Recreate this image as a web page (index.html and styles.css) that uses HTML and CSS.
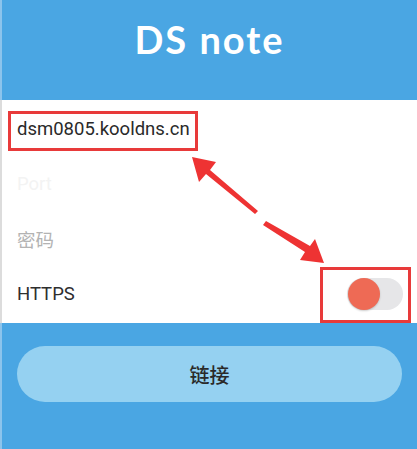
FILE: index.html
```html
<!DOCTYPE html>
<html lang="zh">
<head>
<meta charset="utf-8">
<title>DS note</title>
<link rel="stylesheet" href="styles.css">
</head>
<body>
<div class="app">
  <header class="top">
    <h1 class="title">DS note</h1>
  </header>
  <section class="form">
    <div class="row"><span class="value">dsm0805.kooldns.cn</span></div>
    <div class="row"><span class="ph-faint">Port</span></div>
    <div class="row"><span class="ph">密码</span></div>
    <div class="row row-toggle">
      <span class="label">HTTPS</span>
      <span class="switch"><span class="knob"></span></span>
    </div>
  </section>
  <div class="actions">
    <button class="connect">链接</button>
  </div>

  <div class="mark mark-host"></div>
  <div class="mark mark-switch"></div>
  <svg class="arrows" width="417" height="449" viewBox="0 0 417 449">
    <polygon fill="#ee3333" points="192,157 216,162 210,170 258,211 255,214 206,174 199,182"/>
    <polygon fill="#ee3333" points="324,263 300,260 305,252 263,225 266,221 310,246 315,239"/>
  </svg>
</div>
</body>
</html>
```
FILE: styles.css
```css
* { box-sizing: border-box; }
html, body { margin: 0; padding: 0; }
body {
  width: 417px;
  height: 449px;
  overflow: hidden;
  background: #4aa6e3;
  font-family: Roboto, "Noto Sans", "Noto Sans CJK SC", sans-serif;
}
.app {
  position: relative;
  width: 417px;
  height: 449px;
  background: #4aa6e3;
  border-left: 2px solid #8cc4ec;
}
.top {
  height: 100px;
  display: flex;
  justify-content: center;
  padding-top: 14px;
}
.title {
  margin: 0;
  color: #ffffff;
  font-family: Lato, "Open Sans", sans-serif;
  font-weight: 700;
  font-size: 38px;
  letter-spacing: 2px;
  line-height: 50px;
}
.form {
  background: #ffffff;
  padding: 1px 0 2px;
  margin-left: -2px;
  border-left: 2px solid #dcdcdc;
}
.row {
  height: 55px;
  display: flex;
  align-items: center;
  padding: 0 15px 0 15px;
  font-size: 18.5px;
}
.value { color: #2a2a2a; }
.ph-faint { color: #f3f3f3; }
.ph { color: #b3b3b3; }
.label { color: #2e2e2e; }
.row-toggle { justify-content: space-between; }
.switch {
  width: 56px;
  height: 32px;
  border-radius: 16px;
  background: #e6e6e8;
  position: relative;
  margin-right: -1px;
}
.knob {
  position: absolute;
  left: 1px;
  top: 0px;
  width: 32px;
  height: 32px;
  border-radius: 50%;
  background: #ee6a55;
  box-shadow: 0 1px 2px rgba(0,0,0,0.2);
}
.actions {
  padding: 23px 15px 0 15px;
}
.connect {
  display: block;
  width: 100%;
  height: 56px;
  border: none;
  border-radius: 28px;
  background: #95d1f1;
  color: #2a2a2a;
  font-family: "Noto Sans CJK SC", sans-serif;
  font-size: 20px;
  font-weight: 500;
}
.mark {
  position: absolute;
  border: 3px solid #e83a3a;
}
.mark-host { left: 6px; top: 111px; width: 190px; height: 40px; }
.mark-switch { left: 318px; top: 267px; width: 91px; height: 56px; }
.arrows { position: absolute; left: -2px; top: 0; }
```
